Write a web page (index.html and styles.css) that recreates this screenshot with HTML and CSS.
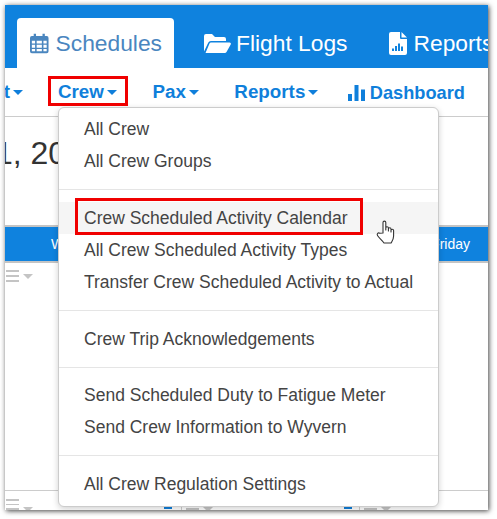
FILE: index.html
```html
<!DOCTYPE html>
<html lang="en">
<head>
    <meta charset="UTF-8">
    <title>Crew Menu</title>
    <link rel="stylesheet" href="styles.css">
</head>

<body>
    <div class="window">
        <nav class="top-tabs">
            <a class="tab active" href="#">
                <svg class="tab-icon icon-cal" width="20" height="22" viewBox="0 0 20 22">
                    <path fill="#4a86bf" fill-rule="evenodd" d="M4 1h2.500v2.500h7V1H16v2.500h2a2 2 0 0 1 2 2V20a2 2 0 0 1-2 2H2a2 2 0 0 1-2-2V5.500a2 2 0 0 1 2-2h2zM2 8.500v3h3.500v-3zm5.200 0v3h5.600v-3zm7.300 0v3H18v-3zM2 13v3h3.500v-3zm5.200 0v3h5.600v-3zm7.300 0v3H18v-3zM2 17.500V20h3.500v-2.500zm5.200 0V20h5.600v-2.500zm7.300 0V20H18v-2.500z"/>
                </svg>
                Schedules
            </a>
            <a class="tab" href="#">
                <svg class="tab-icon icon-folder" width="27" height="20" viewBox="0 0 27 20">
                    <path fill="#fff" d="M0 3a2 2 0 0 1 2-2h6l3 3h9a2 2 0 0 1 2 2v2H7a3 3 0 0 0-2.800 1.800L0 18.500z"/>
                    <path fill="#fff" d="M7 9.500h18.500a1.300 1.300 0 0 1 1.200 1.900L22.500 19a2 2 0 0 1-1.700 1H1.500l4-9.500A1.700 1.700 0 0 1 7 9.500z"/>
                </svg>
                Flight Logs
            </a>
            <a class="tab" href="#">
                <svg class="tab-icon icon-report" width="18" height="23" viewBox="0 0 18 23">
                    <path fill="#fff" fill-rule="evenodd" d="M2 0h9v6a1 1 0 0 0 1 1h6v14a2 2 0 0 1-2 2H2a2 2 0 0 1-2-2V2a2 2 0 0 1 2-2zm4 14v5h2v-5zm-3 2.500V19h2v-2.500zm6-5V19h2v-7.500zm3 3V19h2v-4.500zM12.500 0 18 5.500h-5.500z"/>
                </svg>
                Reports
            </a>
        </nav>

        <div class="sub-nav">
            <a class="sub-link first" href="#">Flight<i class="caret"></i></a>
            <a class="sub-link" href="#">Crew<i class="caret"></i></a>
            <a class="sub-link" href="#">Pax<i class="caret"></i></a>
            <a class="sub-link" href="#">Reports<i class="caret"></i></a>
            <a class="sub-link dash" href="#">
                <svg width="17" height="16" viewBox="0 0 17 16">
                    <path fill="#0f7fdb" d="M0 9h4v7H0zM6.500 0h4v16h-4zM13 4.500h4V16h-4z"/>
                </svg>
                Dashboard
            </a>
        </div>

        <h2 class="date-title">April 1, 2022</h2>

        <div class="table-head">
            <span>Wednesday</span>
            <span class="friday">Friday</span>
        </div>
        <div class="table-tools">
            <span class="bars"><i></i><i></i><i></i></span>
            <i class="caret grey"></i>
        </div>

        <div class="week-end">
            <div class="day day-first">
                <span class="bars"><i></i><i></i><i></i></span>
                <i class="caret grey"></i>
                <i class="event event-a"></i>
            </div>
            <div class="day">
                <span class="bars"><i></i><i></i><i></i></span>
                <i class="caret grey"></i>
                <i class="event event-b"></i>
            </div>
            <div class="day day-last">
                <span class="bars"><i></i><i></i><i></i></span>
                <i class="caret grey"></i>
            </div>
        </div>

        <ul class="menu">
            <li>All Crew</li>
            <li>All Crew Groups</li>
            <li class="divider"></li>
            <li class="hover">Crew Scheduled Activity Calendar</li>
            <li>All Crew Scheduled Activity Types</li>
            <li>Transfer Crew Scheduled Activity to Actual</li>
            <li class="divider"></li>
            <li>Crew Trip Acknowledgements</li>
            <li class="divider"></li>
            <li>Send Scheduled Duty to Fatigue Meter</li>
            <li>Send Crew Information to Wyvern</li>
            <li class="divider"></li>
            <li>All Crew Regulation Settings</li>
        </ul>

        <div class="mark mark-crew"></div>
        <div class="mark mark-item"></div>

        <svg class="hand" width="20" height="24" viewBox="0 0 20 24">
            <path fill="#fff" stroke="#333" stroke-width="1.100" stroke-linejoin="round" d="M7 13V2.500a1.400 1.400 0 0 1 2.800 0V10V8a1.300 1.300 0 0 1 2.600 0v3V9a1.300 1.300 0 0 1 2.600 0v3v-1.500a1.300 1.300 0 0 1 2.600 0V16c0 3-1.200 4.500-2.500 7H8C6 20 3 18 1.500 15.500c-1-1.700.8-3.200 2.200-2.200z"/>
        </svg>
    </div>
</body>
</html>
```

FILE: styles.css
```css
* {
    box-sizing: border-box;
}

body {
    font-family: "Liberation Sans", Arial, sans-serif;
    background-color: #ffffff;
    margin: 0;
    padding: 5px 9px 9px 5px;
}

a {
    text-decoration: none;
}

.window {
    position: relative;
    width: 483px;
    height: 505px;
    background-color: #ffffff;
    overflow: hidden;
    box-shadow: 1px 1px 5px rgba(0, 0, 0, 0.75);
}

.top-tabs {
    display: flex;
    height: 63px;
    padding: 13px 0 0 12px;
    background-color: #0f82de;
    white-space: nowrap;
}

.tab {
    display: flex;
    align-items: center;
    gap: 6px;
    flex-shrink: 0;
    height: 50px;
    padding: 0 12px 0 13px;
    margin-right: 16px;
    border-radius: 4px 4px 0 0;
    font-size: 22.800px;
    color: #ffffff;
}

.tab.active {
    width: 157px;
    margin-right: 17px;
    background-color: #ffffff;
    color: #4a86bf;
}

.icon-cal {
    margin-right: 1px;
}

.icon-folder {
    margin-right: -1px;
}

.icon-report {
    margin-right: 1px;
}

.sub-nav {
    display: flex;
    align-items: center;
    height: 49px;
    margin-left: -34px;
    border-bottom: 1px solid #cccccc;
    white-space: nowrap;
}

.sub-link {
    display: flex;
    align-items: center;
    flex-shrink: 0;
    margin-right: 35.500px;
    font-size: 18.800px;
    font-weight: bold;
    color: #0f7fdb;
}

.sub-link.first {
    width: 52px;
    margin-right: 35px;
    justify-content: flex-end;
}

.sub-link.dash {
    gap: 5px;
    margin: 2px 0 0 -6px;
    font-size: 18.200px;
}

.caret {
    display: inline-block;
    width: 0;
    height: 0;
    margin-left: 3px;
    border-top: 5px solid #0f7fdb;
    border-left: 5px solid transparent;
    border-right: 5px solid transparent;
}

.caret.grey {
    border-top-color: #c4c4c4;
    margin-left: 4px;
}

.date-title {
    height: 108px;
    margin: 0 0 0 -83px;
    padding-top: 18px;
    font-size: 32px;
    font-weight: normal;
    color: #333333;
    white-space: nowrap;
}

.table-head {
    display: flex;
    justify-content: space-between;
    align-items: center;
    height: 38px;
    padding: 0 18px 0 46px;
    background-color: #0f82de;
    border-top: 2px solid #c4c4c4;
    border-bottom: 2px solid #c4c4c4;
    font-size: 14px;
    color: #ffffff;
}

.table-tools {
    display: flex;
    align-items: center;
    padding: 7px 0 0 1px;
}

.bars {
    display: flex;
    flex-direction: column;
    gap: 3px;
    width: 13px;
}

.bars i {
    display: block;
    height: 2px;
    background-color: #c4c4c4;
}

.week-end {
    position: absolute;
    left: 0;
    right: 0;
    top: 485px;
    display: flex;
    border-top: 1px solid #cccccc;
}

.day {
    display: flex;
    width: 178px;
    height: 19px;
    padding: 8px 0 0 4px;
    border-left: 1px solid #cccccc;
}

.day-first {
    width: 176px;
    padding-left: 1px;
    border-left: none;
}

.day-last {
    flex: 1;
}

.day .caret {
    margin-top: 8px;
}

.event {
    width: 8px;
    height: 10px;
    margin-left: auto;
    margin-right: 9px;
    background-color: #0f7fdb;
}

.event-b {
    margin-right: 7px;
    background-color: transparent;
    border: 2px solid #0f7fdb;
    border-top: none;
}

.menu {
    position: absolute;
    top: 102px;
    left: 53px;
    width: 381px;
    height: 400px;
    margin: 0;
    padding: 5px 0;
    list-style: none;
    background-color: #ffffff;
    border: 1px solid #cccccc;
    border-radius: 6px;
    box-shadow: 0 2px 6px rgba(0, 0, 0, 0.18);
}

.menu li {
    height: 32.100px;
    padding: 0 0 0 25px;
    font-size: 17.500px;
    line-height: 32px;
    color: #444444;
    white-space: nowrap;
}

.menu li.hover {
    background-color: #f5f5f5;
}

.menu li.divider {
    height: 1px;
    margin: 11.800px 0;
    background-color: #e5e5e5;
}

.mark {
    position: absolute;
    border: 3px solid #f00000;
}

.mark-crew {
    left: 43px;
    top: 71px;
    width: 80px;
    height: 30px;
}

.mark-item {
    left: 70px;
    top: 193px;
    width: 288px;
    height: 37px;
}

.hand {
    position: absolute;
    left: 371px;
    top: 215px;
}
```
